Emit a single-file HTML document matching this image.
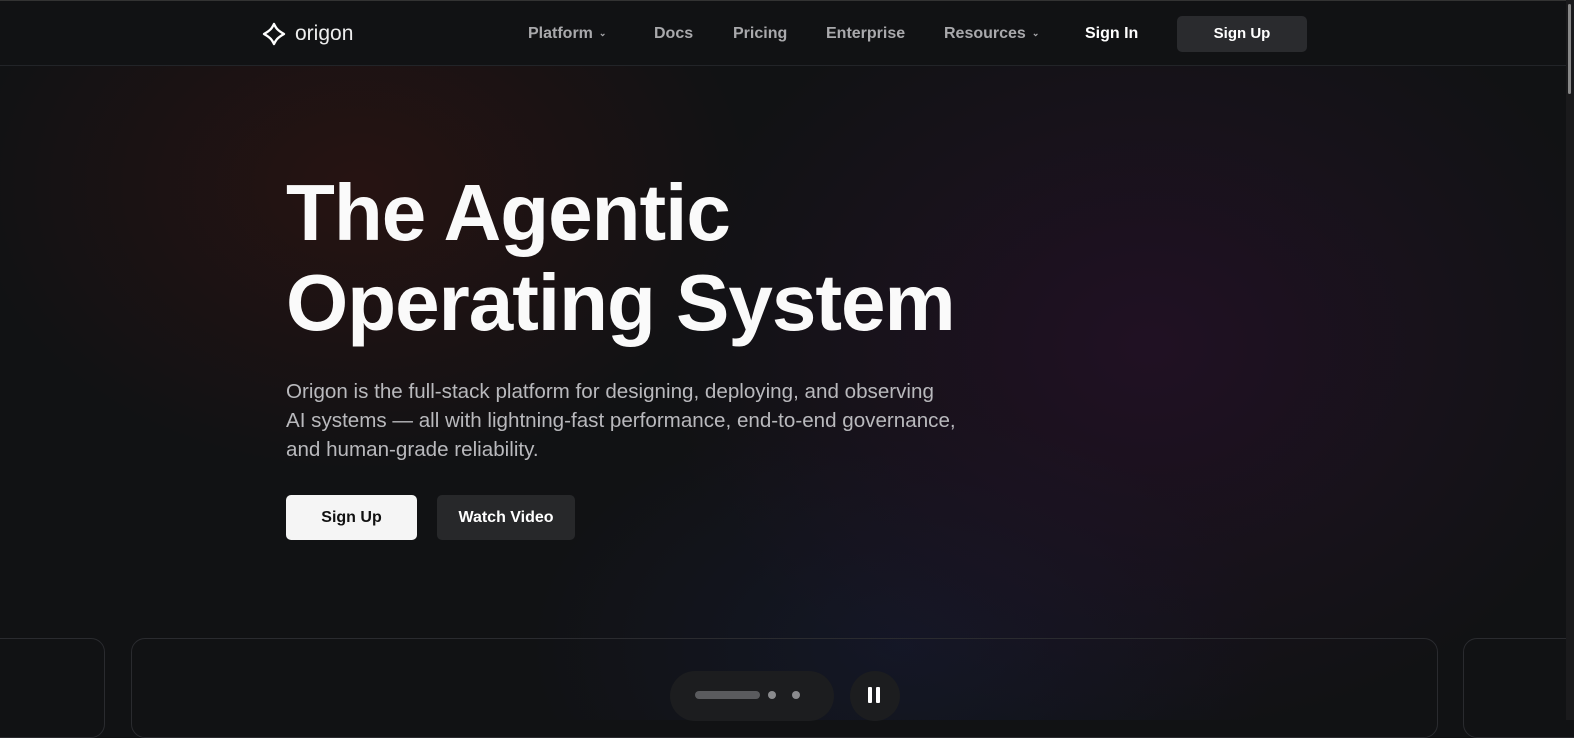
<!DOCTYPE html>
<html><head><meta charset="utf-8"><style>
*{margin:0;padding:0;box-sizing:border-box}
html,body{width:1574px;height:720px;overflow:hidden;background:#111214;font-family:"Liberation Sans",sans-serif;color:#fff}
.bg{position:absolute;left:0;top:66px;width:1574px;height:654px;
background:
radial-gradient(ellipse 520px 380px at 360px 120px,rgba(60,20,16,.5),transparent 75%),
radial-gradient(ellipse 650px 520px at 1150px 280px,rgba(45,16,48,.55),transparent 75%),
radial-gradient(ellipse 500px 320px at 900px 580px,rgba(22,28,55,.5),transparent 75%),
#111214}
.nav{position:absolute;top:0;left:0;width:1566px;height:66px;background:#111214;border-bottom:1px solid #222428;border-top:1px solid #333}
.logo{position:absolute;left:261px;top:20px;display:flex;align-items:center;gap:8px;font-size:21px;color:#eee}
.nl{position:absolute;top:24px;font-size:16px;font-weight:bold;color:#a9a9ac}
.chev{font-size:9px;margin-left:6px;vertical-align:2px}
.signup{position:absolute;left:1177px;top:15px;width:130px;height:36px;background:#2a2b2e;border-radius:5px;font-size:15px;font-weight:bold;text-align:center;line-height:36px}
h1{position:absolute;left:286px;top:168px;font-size:80px;line-height:90px;font-weight:bold;letter-spacing:-1px;color:#fafafa}
p{position:absolute;left:286px;top:377px;width:720px;font-size:20.6px;line-height:29px;color:#b9b9bd}
.b1{position:absolute;left:286px;top:495px;width:131px;height:45px;background:#f5f5f5;color:#111;border-radius:5px;text-align:center;line-height:45px;font-weight:bold;font-size:16px}
.b2{position:absolute;left:437px;top:495px;width:138px;height:45px;background:#27282a;color:#fff;border-radius:5px;text-align:center;line-height:45px;font-weight:bold;font-size:16px}
.card{position:absolute;top:638px;height:100px;border:1px solid #2a2b2f;border-radius:14px}
.sb{position:absolute;right:0;top:0;width:8px;height:720px;background:#1a1a1c}
.sb div{position:absolute;left:2px;top:4px;width:3px;height:90px;background:#888;border-radius:2px}
</style></head><body>
<div class="bg"></div>
<div class="nav">
 <div class="logo"><svg width="26" height="26" viewBox="0 0 26 26"><path d="M13 3 C15 7 16 9 23 13 C16 17 15 19 13 23 C11 19 10 17 3 13 C10 9 11 7 13 3Z" fill="none" stroke="#fff" stroke-width="2.4" stroke-linejoin="round"/></svg>origon</div>
 <div class="nl" style="left:528px">Platform<span class="chev">⌄</span></div>
 <div class="nl" style="left:654px">Docs</div>
 <div class="nl" style="left:733px">Pricing</div>
 <div class="nl" style="left:826px">Enterprise</div>
 <div class="nl" style="left:944px">Resources<span class="chev">⌄</span></div>
 <div class="nl" style="left:1085px;color:#fff">Sign In</div>
 <div class="signup">Sign Up</div>
</div>
<h1>The Agentic<br>Operating System</h1>
<p>Origon is the full-stack platform for designing, deploying, and observing<br>AI systems — all with lightning-fast performance, end-to-end governance,<br>and human-grade reliability.</p>
<div class="b1">Sign Up</div>
<div class="b2">Watch Video</div>
<div class="card" style="left:-20px;width:125px"></div>
<div class="card" style="left:131px;width:1307px"></div>
<div class="card" style="left:1463px;width:140px"></div>
<div style="position:absolute;left:670px;top:671px;width:164px;height:50px;border-radius:25px;background:#1c1d1f"></div>
<div style="position:absolute;left:695px;top:691px;width:65px;height:8px;border-radius:4px;background:#5a5b5e"></div>
<div style="position:absolute;left:768px;top:691px;width:8px;height:8px;border-radius:4px;background:#8a8b8e"></div>
<div style="position:absolute;left:792px;top:691px;width:8px;height:8px;border-radius:4px;background:#8a8b8e"></div>
<div style="position:absolute;left:850px;top:671px;width:50px;height:50px;border-radius:25px;background:#1c1d1f"></div>
<div style="position:absolute;left:868px;top:687px;width:4px;height:16px;background:#fff;border-radius:1px"></div>
<div style="position:absolute;left:876px;top:687px;width:4px;height:16px;background:#fff;border-radius:1px"></div>
<div class="sb"><div></div></div>
</body></html>
